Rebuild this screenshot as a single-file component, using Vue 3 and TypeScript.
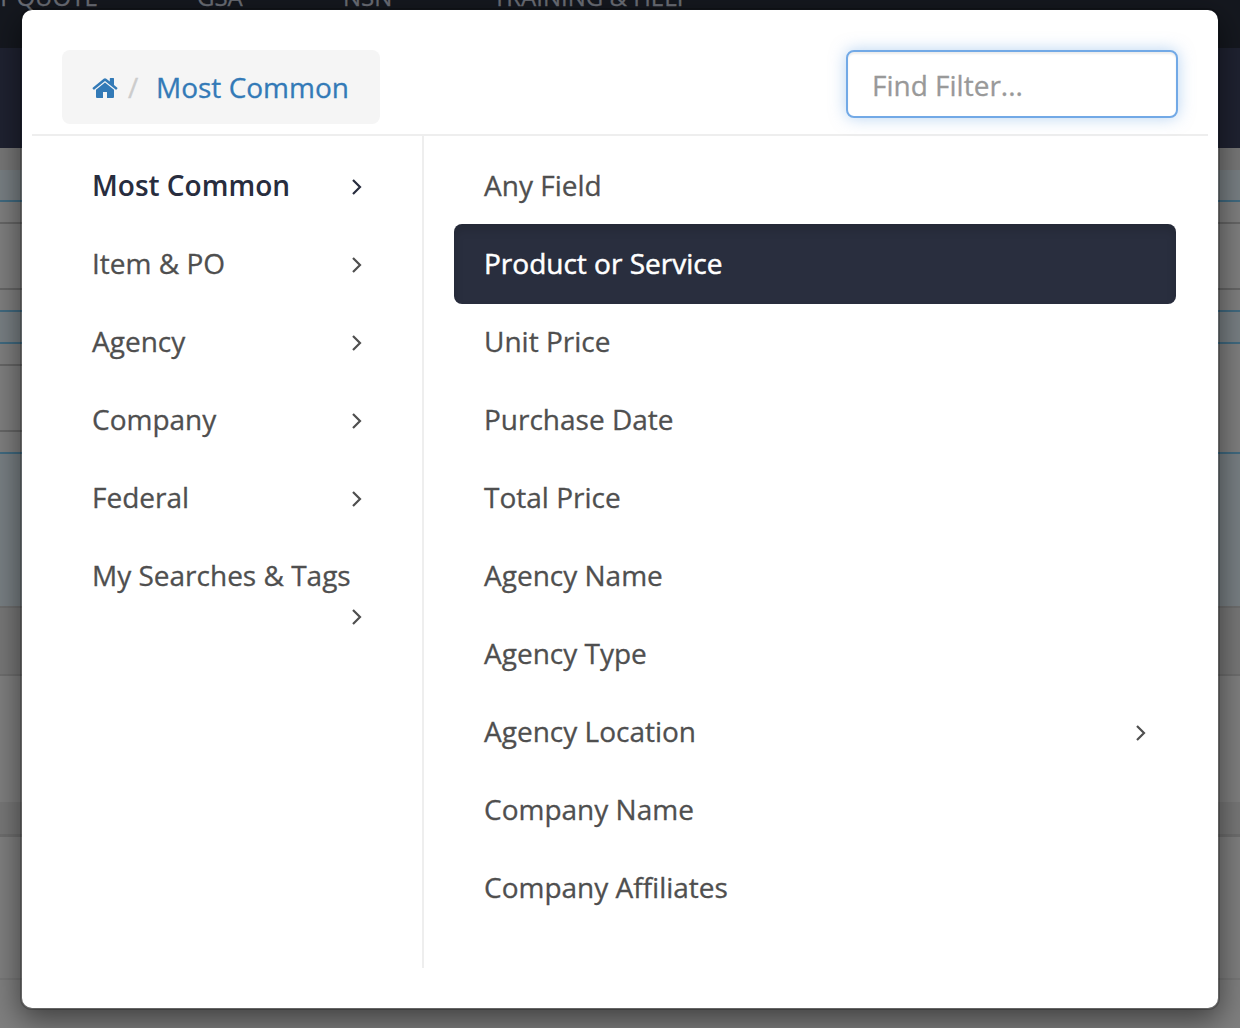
<script setup lang="ts">
import { ref } from 'vue'

interface Category { label: string; wraps?: boolean }
interface Field { label: string; nested?: boolean }
interface Band { h: number; kind: string; leftOnly?: boolean }

const categories: Category[] = [
  { label: 'Most Common' },
  { label: 'Item & PO' },
  { label: 'Agency' },
  { label: 'Company' },
  { label: 'Federal' },
  { label: 'My Searches & Tags', wraps: true },
]

const fields: Field[] = [
  { label: 'Any Field' },
  { label: 'Product or Service' },
  { label: 'Unit Price' },
  { label: 'Purchase Date' },
  { label: 'Total Price' },
  { label: 'Agency Name' },
  { label: 'Agency Type' },
  { label: 'Agency Location', nested: true },
  { label: 'Company Name' },
  { label: 'Company Affiliates' },
]

const bands: Band[] = [
  { h: 100, kind: 'navy' },
  { h: 22, kind: 'shade' },
  { h: 30, kind: 'tint' },
  { h: 2, kind: 'blue' },
  { h: 20, kind: 'plain' },
  { h: 2, kind: 'rule' },
  { h: 64, kind: 'plain' },
  { h: 2, kind: 'rule' },
  { h: 20, kind: 'plain' },
  { h: 2, kind: 'blue' },
  { h: 30, kind: 'tint' },
  { h: 2, kind: 'blue' },
  { h: 20, kind: 'plain' },
  { h: 2, kind: 'rule', leftOnly: true },
  { h: 64, kind: 'plain' },
  { h: 2, kind: 'rule', leftOnly: true },
  { h: 20, kind: 'plain' },
  { h: 2, kind: 'blue' },
  { h: 152, kind: 'tint' },
  { h: 2, kind: 'soft' },
  { h: 66, kind: 'shade' },
  { h: 2, kind: 'soft' },
  { h: 126, kind: 'plain' },
  { h: 32, kind: 'shade' },
  { h: 3, kind: 'soft' },
  { h: 141, kind: 'plain' },
  { h: 2, kind: 'shade' },
  { h: 48, kind: 'plain' },
]

const category = ref('Most Common')
const field = ref('Product or Service')
const query = ref('')
</script>

<template>
  <div class="screen">
    <div class="page">
      <nav class="topnav">
        <span class="nav-quote">T QUOTE</span>
        <span class="nav-gsa">GSA</span>
        <span class="nav-nsn">NSN</span>
        <span>TRAINING &amp; HELP</span>
      </nav>
      <div
        v-for="(b, i) in bands"
        :key="i"
        :class="['band', b.kind, { half: b.leftOnly }]"
        :style="{ height: b.h + 'px' }"
      ></div>
    </div>

    <section class="modal">
      <header class="head">
        <div class="crumbs">
          <svg class="home" viewBox="0 0 26 22" width="26" height="22">
            <path d="M13 5.4 4 12.8V20q0 1 1 1h6v-6h4v6h6q1 0 1-1v-7.2z" />
            <path d="M25.3 10.7 22 8V1.6q0-.6-.6-.6h-3q-.6 0-.6.6v3L14.300 1.700q-1.300-1-2.600 0L.7 10.700q-.5.5-.1.900l.9 1q.4.400.9 0L13 3.900l10.600 8.700q.5.400.9 0l.9-1q.4-.5-.1-.9z" />
          </svg>
          <span class="slash">/</span>
          <span class="current">{{ category }}</span>
        </div>
        <input v-model="query" class="find" type="text" placeholder="Find Filter..." />
      </header>
      <div class="body">
        <ul class="cats">
          <li
            v-for="c in categories"
            :key="c.label"
            :class="{ active: c.label === category, wraps: c.wraps }"
            @click="category = c.label"
          >
            <span>{{ c.label }}</span>
            <svg class="chev" viewBox="0 0 12 18" width="12" height="18"><path d="M3 2l7 7-7 7" /></svg>
          </li>
        </ul>
        <ul class="fields">
          <li
            v-for="f in fields"
            :key="f.label"
            :class="{ selected: f.label === field }"
            @click="field = f.label"
          >
            <span>{{ f.label }}</span>
            <svg v-if="f.nested" class="chev" viewBox="0 0 12 18" width="12" height="18"><path d="M3 2l7 7-7 7" /></svg>
          </li>
        </ul>
      </div>
    </section>
  </div>
</template>

<style>
body { margin: 0; overflow: hidden; }
</style>

<style scoped>
* { box-sizing: border-box; }
.screen {
  position: relative;
  width: 1240px;
  height: 1028px;
  overflow: hidden;
  background: #7f7f7f;
  font: 28px/40px "Open Sans", "Noto Sans", sans-serif;
  color: #4f4f4f;
  -webkit-text-stroke-width: 0.3px;
}
.page { display: flex; flex-direction: column; }
.topnav {
  display: flex;
  height: 48px;
  background: #15181f;
  color: #6b6e76;
  font-size: 24px;
  line-height: 34px;
  white-space: nowrap;
}
.topnav span { margin-top: -20px; }
.nav-quote { width: 200px; margin-left: -3px; }
.nav-gsa { width: 146px; }
.nav-nsn { width: 150px; }
.band { flex: none; background: #7f7f7f; }
.navy { background: #1f2231; }
.shade { background: #777; }
.tint { background: #787f83; }
.blue { background: #406a80; }
.rule { background: #666; }
.soft { background: #6e6e6e; }
.half { background: linear-gradient(90deg, #666 50%, #7f7f7f 50%); }

.modal {
  position: absolute;
  left: 20px;
  top: 8px;
  width: 1200px;
  height: 1002px;
  border: 2px solid rgba(0, 0, 0, 0.2);
  border-radius: 12px;
  background: #fff;
  background-clip: padding-box;
  box-shadow: 0 10px 30px rgba(0, 0, 0, 0.5);
  padding: 0 10px;
}
.head {
  display: flex;
  justify-content: space-between;
  align-items: flex-start;
  height: 126px;
  padding: 40px 30px 0;
  border-bottom: 2px solid #eee;
}
.crumbs {
  display: flex;
  align-items: center;
  width: 318px;
  height: 74px;
  padding: 0 0 0 30px;
  border-radius: 8px;
  background: #f5f5f5;
  color: #337ab7;
  white-space: nowrap;
}
.home { margin-top: 2px; fill: #337ab7; }
.slash { width: 28px; margin-left: 10px; color: #ccc; }
.find {
  width: 332px;
  height: 68px;
  padding: 1px 24px 0;
  border: 2px solid #72a9e6;
  border-radius: 8px;
  outline: none;
  background: #fff;
  box-shadow: inset 0 2px 2px rgba(0, 0, 0, 0.075), 0 0 16px rgba(114, 169, 230, 0.5);
  font: inherit;
  color: #555;
  -webkit-text-stroke-width: 0.3px;
}
.find::placeholder { color: #999; opacity: 1; }
.body { display: flex; height: 832px; }
ul { margin: 0; padding: 10px 0 0; list-style: none; }
.cats { width: 392px; border-right: 2px solid #eee; padding-left: 30px; padding-right: 30px; }
.fields { flex: 1; padding-left: 30px; padding-right: 32px; }
li {
  display: flex;
  justify-content: space-between;
  height: 80px;
  margin-bottom: -2px;
  padding: 19px 30px 21px;
  border-radius: 8px;
  white-space: nowrap;
}
.chev {
  flex: none;
  margin-top: 13px;
  fill: none;
  stroke: currentColor;
  stroke-width: 2.2;
}
.active { color: #282d3e; font-weight: 600; -webkit-text-stroke-width: 0; }
.wraps { flex-direction: column; justify-content: flex-start; height: 120px; }
.wraps .chev { align-self: flex-end; }
.selected {
  background: #292e3e;
  box-shadow: inset 0 6px 10px rgba(0, 0, 0, 0.125);
  color: #fff;
  -webkit-text-stroke-width: 0.5px;
}
</style>
